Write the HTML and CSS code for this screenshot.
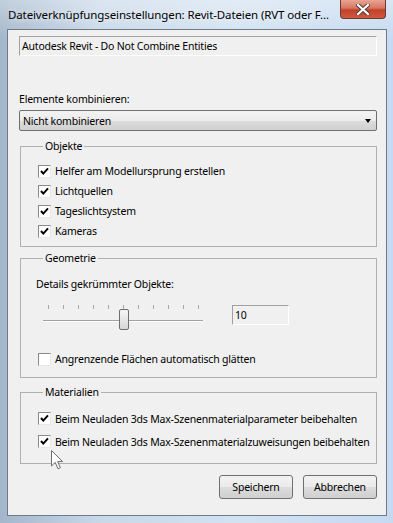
FILE: index.html
```html
<!DOCTYPE html>
<html lang="de">
<head>
    <meta charset="UTF-8">
    <title>Dateiverknüpfungseinstellungen</title>
    <link rel="stylesheet" href="styles.css">
</head>
<body>

    <div class="window">

        <!-- Title bar -->
        <div class="titlebar">
            <span class="title">Dateiverknüpfungseinstellungen: Revit-Dateien (RVT oder F...</span>
            <button class="close-btn">
                <svg width="14" height="11" viewBox="0 0 14 11">
                    <path d="M2 1 L12 10 M12 1 L2 10" stroke="#4a3a36" stroke-width="4" stroke-linecap="square"/>
                    <path d="M2 1 L12 10 M12 1 L2 10" stroke="#fff" stroke-width="2.2" stroke-linecap="square"/>
                </svg>
            </button>
        </div>

        <!-- Dialog body -->
        <div class="client">
            <div class="readonly-field">Autodesk Revit - Do Not Combine Entities</div>

            <div class="field-label">Elemente kombinieren:</div>
            <div class="combo">
                <span>Nicht kombinieren</span>
                <span class="combo-arrow"></span>
            </div>

            <fieldset class="group group-objects">
                <legend>Objekte</legend>
                <div class="check-row"><span class="check checked"></span>Helfer am Modellursprung erstellen</div>
                <div class="check-row"><span class="check checked"></span>Lichtquellen</div>
                <div class="check-row"><span class="check checked"></span>Tageslichtsystem</div>
                <div class="check-row"><span class="check checked"></span>Kameras</div>
            </fieldset>

            <fieldset class="group group-geometry">
                <legend>Geometrie</legend>
                <div class="geo-label">Details gekrümmter Objekte:</div>
                <div class="slider-row">
                    <div class="slider">
                        <div class="ticks">
                            <span></span><span></span><span></span><span></span><span></span><span></span>
                            <span></span><span></span><span></span><span></span><span></span>
                        </div>
                        <div class="track"></div>
                        <div class="thumb"></div>
                    </div>
                    <div class="spin-field">10</div>
                </div>
                <div class="check-row"><span class="check"></span>Angrenzende Flächen automatisch glätten</div>
            </fieldset>

            <fieldset class="group group-materials">
                <legend>Materialien</legend>
                <div class="check-row"><span class="check checked"></span>Beim Neuladen 3ds Max-Szenenmaterialparameter beibehalten</div>
                <div class="check-row"><span class="check checked"></span>Beim Neuladen 3ds Max-Szenenmaterialzuweisungen beibehalten</div>
            </fieldset>

            <div class="buttons">
                <button class="btn">Speichern</button>
                <button class="btn">Abbrechen</button>
            </div>
        </div>

        <!-- Mouse pointer -->
        <svg class="cursor" width="14" height="21" viewBox="0 0 14 21">
            <path d="M0.5 0.5 L0.5 16 L4.2 12.4 L7 18.8 L9.4 17.8 L6.7 11.6 L11.6 11.6 Z" fill="#fff" stroke="#6d6d6d" stroke-width="1"/>
        </svg>
    </div>

</body>
</html>
```

FILE: styles.css
```css
body {
    margin: 0;
    font-family: "Noto Sans", "Open Sans", sans-serif;
    font-size: 10.5px;
    letter-spacing: -0.2px;
    color: #000;
}

.window {
    position: relative;
    width: 393px;
    height: 523px;
    overflow: hidden;
    background:
        linear-gradient(to bottom, rgba(255, 255, 255, 0.35), rgba(255, 255, 255, 0) 40px),
        linear-gradient(to right, #a3b6ca 0%, #c8d8e9 25%, #d3e2f1 60%, #c5daf1 100%);
}

/* Title bar */
.titlebar {
    display: flex;
    height: 29px;
    padding: 0 7px 0 8px;
}

.title {
    min-width: 0;
    overflow: hidden;
    padding-top: 7px;
    font-size: 11.5px;
    letter-spacing: -0.12px;
    line-height: 16px;
    white-space: nowrap;
    text-shadow: 0 0 6px rgba(255, 255, 255, 0.9);
}

.close-btn {
    flex-shrink: 0;
    margin-left: auto;
    width: 46px;
    height: 19px;
    padding: 0;
    display: flex;
    align-items: center;
    justify-content: center;
    border: 1px solid #6b3a33;
    border-top: none;
    border-radius: 0 0 4px 4px;
    background: linear-gradient(to bottom, #e8a493 0%, #d7775f 45%, #c2412b 55%, #d0583f 100%);
}

/* Client area */
.client {
    box-sizing: border-box;
    width: 380px;
    height: 487px;
    margin-left: 7px;
    padding: 6px 9px 0 11px;
    border: 1px solid #6f7a86;
    background: #f0f0f0;
}

.readonly-field {
    box-sizing: border-box;
    height: 20px;
    padding: 0 2px;
    line-height: 18px;
    border: 1px solid;
    border-color: #a0a0a0 #fff #fff #a0a0a0;
}

.field-label {
    margin-top: 36px;
    line-height: 14px;
}

.combo {
    box-sizing: border-box;
    display: flex;
    align-items: center;
    justify-content: space-between;
    height: 21px;
    margin-top: 4px;
    padding: 0 5px 0 3px;
    border: 1px solid #707070;
    border-radius: 2px;
    background: linear-gradient(to bottom, #f3f3f3 0%, #ebebeb 50%, #dddddd 51%, #d0d0d0 100%);
}

.combo-arrow {
    width: 0;
    height: 0;
    border-left: 3.5px solid transparent;
    border-right: 3.5px solid transparent;
    border-top: 4px solid #000;
}

/* Group boxes */
.group {
    margin: 0 0 0 1px;
    padding: 8px 0 6px 17px;
    border: 1px solid #b0b0b0;
    min-width: 0;
}

.group legend {
    margin-left: 5px;
    padding: 0 2px;
    line-height: 14px;
}

.group-objects {
    margin-top: 8px;
    padding-bottom: 5px;
}

.group-geometry {
    margin-top: 4px;
    padding-top: 12px;
    padding-bottom: 8px;
}

.group-materials {
    margin-top: 7px;
    padding-bottom: 10px;
}

.check-row {
    display: flex;
    align-items: center;
    height: 20px;
    white-space: nowrap;
}

.group-materials .check-row {
    height: 23px;
}

.check {
    box-sizing: border-box;
    width: 13px;
    height: 13px;
    margin-right: 4px;
    flex-shrink: 0;
    border: 1px solid;
    border-color: #8a8a8a #e8e8e8 #e8e8e8 #8a8a8a;
    background: #fff;
}

.check.checked {
    background: #fff url("data:image/svg+xml,%3Csvg xmlns='http://www.w3.org/2000/svg' width='11' height='11'%3E%3Cpath d='M2 5 L4.3 7.6 L9 2.4' fill='none' stroke='%23000' stroke-width='2'/%3E%3C/svg%3E") center no-repeat;
}

/* Slider */
.geo-label {
    margin-left: -2px;
    line-height: 14px;
}

.slider-row {
    display: flex;
    align-items: flex-start;
    margin: 12px 0 0 5px;
    height: 46px;
}

.slider {
    position: relative;
    width: 160px;
    height: 32px;
    padding-top: 2px;
    box-sizing: border-box;
}

.ticks {
    display: flex;
    gap: 14px;
    padding-left: 5px;
    height: 4px;
}

.ticks span {
    width: 1px;
    height: 4px;
    background: #a8a8a8;
}

.track {
    margin-top: 11px;
    height: 1px;
    background: #a0a0a0;
    border-bottom: 1px solid #fff;
}

.thumb {
    position: absolute;
    left: 76px;
    top: 6px;
    box-sizing: border-box;
    width: 10px;
    height: 21px;
    border: 1px solid #6f6f6f;
    border-radius: 2px;
    background: linear-gradient(to bottom, #f5f5f5 0%, #e6e6e6 50%, #d7d7d7 100%);
}

.spin-field {
    box-sizing: border-box;
    width: 57px;
    height: 20px;
    margin: 2px 0 0 29px;
    padding: 0 2px;
    line-height: 18px;
    border: 1px solid;
    border-color: #a0a0a0 #fff #fff #a0a0a0;
}

/* Buttons */
.buttons {
    display: flex;
    justify-content: flex-end;
    gap: 10px;
    margin-top: 11px;
}

.btn {
    width: 74px;
    height: 24px;
    padding: 0;
    font-family: inherit;
    font-size: 10.5px;
    letter-spacing: -0.2px;
    border: 1px solid #707070;
    border-radius: 3px;
    background: linear-gradient(to bottom, #f2f2f2 0%, #ebebeb 50%, #dddddd 51%, #cfcfcf 100%);
}

.cursor {
    position: absolute;
    left: 51px;
    top: 450px;
}
```
